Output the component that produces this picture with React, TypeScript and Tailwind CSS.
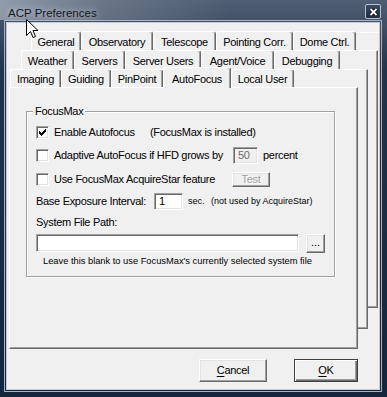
import React from 'react';
import clsx from 'clsx';

const raised =
  'border border-t-white border-l-white border-r-[#696969] border-b-[#696969] bg-[#f0f0f0] shadow-[inset_-1px_-1px_0_#a0a0a0,inset_1px_1px_0_#e3e3e3]';
const sunken =
  'border border-t-[#a0a0a0] border-l-[#a0a0a0] border-r-white border-b-white shadow-[inset_1px_1px_0_#696969,inset_-1px_-1px_0_#e3e3e3]';
const page =
  'border border-t-white border-l-white border-r-[#696969] border-b-[#696969] bg-[#f0f0f0] shadow-[inset_-1px_-1px_0_#a0a0a0]';

function Tab({ label, w, active }: { label: string; w: string; active?: boolean }) {
  return (
    <div
      className={clsx(
        'flex items-center justify-center border-l border-t border-r border-l-white border-t-white border-r-[#696969] rounded-t-[3px] bg-[#f0f0f0] shadow-[inset_-1px_0_0_#a0a0a0] pt-[2px] whitespace-nowrap leading-[13px]',
        w,
        active ? 'h-[21px] translate-y-[1px]' : 'h-full'
      )}
    >
      {label}
    </div>
  );
}

function Check({ checked }: { checked?: boolean }) {
  return (
    <span className={clsx('w-[13px] h-[13px] shrink-0 bg-white flex items-center justify-center', sunken)}>
      {checked && (
        <svg width="7" height="7" viewBox="0 0 7 7" shapeRendering="crispEdges">
          <path d="M0 2h1v1h1v1h1v-1h1v-1h1v-1h1v-1h1v3h-1v1h-1v1h-1v1h-1v1h-1v-1h-1v-1h-1v-1h-1z" fill="#000" />
        </svg>
      )}
    </span>
  );
}

export default function App() {
  return (
    <div className="relative w-[387px] h-[397px] flex flex-col bg-[linear-gradient(180deg,#505e73_0px,#22334a_70px,#15253b_100%)] font-['Liberation_Sans',Arial,sans-serif]">
      {/* title bar */}
      <div className="h-[20px] flex items-start pl-[8px] pr-[6px] bg-[linear-gradient(90deg,rgba(180,190,202,0.65)_0px,rgba(140,152,166,0.45)_100px,rgba(0,0,0,0)_230px)]">
        <span className="mt-[7px] text-[11.5px] leading-[13px] text-[#111722] [text-shadow:0_0_6px_rgba(255,255,255,0.8)]">
          ACP Preferences
        </span>
        <span className="ml-auto mt-[4px] w-[16px] h-[15px] rounded-[2px] border border-[#b9c2ce] bg-[linear-gradient(180deg,#3b4a60,#1e2d42)] flex items-center justify-center">
          <svg width="9" height="8" viewBox="0 0 9 8">
            <path d="M1.5 1 L7.5 7 M7.5 1 L1.5 7" stroke="#000" strokeWidth="3.4" />
            <path d="M1.5 1 L7.5 7 M7.5 1 L1.5 7" stroke="#fff" strokeWidth="1.8" />
          </svg>
        </span>
      </div>

      {/* frame */}
      <div className="ml-[4px] mr-[5px] mb-[5px] flex-1 border border-[#a7b3c3] p-[1px]">
        <div className="relative h-full border border-[#c6ccd4] bg-[#f0f0f0] overflow-hidden flex flex-col text-[11px] tracking-[-0.3px] text-black">
          {/* pages behind */}
          <div className="absolute left-[24px] top-[9px] w-[400px] h-[250px] border-t border-t-white" />
          <div className={clsx('absolute left-[14px] top-[27px] w-[357px] h-[258px]', page)} />
          <div className={clsx('absolute left-[3px] top-[46px] w-[358px] h-[260px]', page)} />

          {/* tab rows */}
          <div className="relative z-10 mt-[8px] h-[19px] pl-[24px] flex">
            <Tab label="General" w="w-[50px]" />
            <Tab label="Observatory" w="w-[72px]" />
            <Tab label="Telescope" w="w-[63px]" />
            <Tab label="Pointing Corr." w="w-[77px]" />
            <Tab label="Dome Ctrl." w="w-[63px]" />
          </div>
          <div className="relative z-10 h-[19px] pl-[14px] flex">
            <Tab label="Weather" w="w-[53px]" />
            <Tab label="Servers" w="w-[51px]" />
            <Tab label="Server Users" w="w-[76px]" />
            <Tab label="Agent/Voice" w="w-[73px]" />
            <Tab label="Debugging" w="w-[66px]" />
          </div>
          <div className="relative z-20 h-[18px] pl-[3px] flex items-end">
            <Tab label="Imaging" w="w-[51px]" />
            <Tab label="Guiding" w="w-[50px]" />
            <Tab label="PinPoint" w="w-[52px]" />
            <Tab label="AutoFocus" w="w-[68px]" active />
            <Tab label="Local User" w="w-[63px]" />
          </div>

          {/* AutoFocus page */}
          <div className={clsx('relative z-10 ml-[2px] w-[349px] h-[262px] pl-[16px] pt-[23px]', page)}>
            <div className="relative w-[309px] h-[166px] border border-[#a0a0a0] shadow-[inset_1px_1px_0_#fff,1px_1px_0_#fff] pl-[9px] flex flex-col leading-[13px]">
              <span className="absolute left-[6px] -top-[7px] px-[2px] bg-[#f0f0f0]">FocusMax</span>

              <div className="mt-[14px] h-[13px] flex items-center">
                <Check checked />
                <span className="ml-[5px] w-[96px]">Enable Autofocus</span>
                <span>(FocusMax is installed)</span>
              </div>

              <div className="mt-[8px] h-[17px] flex items-center">
                <Check />
                <span className="ml-[5px] w-[179px]">Adaptive AutoFocus if HFD grows by</span>
                <span className={clsx('w-[25px] h-[17px] bg-[#f0f0f0] pl-[4px] pt-[1px] text-[#6d6d6d]', sunken)}>50</span>
                <span className="ml-[5px]">percent</span>
              </div>

              <div className="mt-[8px] h-[15px] flex items-center">
                <Check />
                <span className="ml-[5px] w-[178px]">Use FocusMax AcquireStar feature</span>
                <span className={clsx('w-[38px] h-[15px] flex items-center justify-center text-[#a0a0a0] [text-shadow:1px_1px_0_#fff]', raised)}>
                  Test
                </span>
              </div>

              <div className="mt-[6px] h-[17px] flex items-center">
                <span className="w-[118px]">Base Exposure Interval:</span>
                <span className={clsx('w-[29px] h-[17px] bg-white pl-[4px] pt-[1px]', sunken)}>1</span>
                <span className="ml-[5px] w-[23px] text-[9px] tracking-normal">sec.</span>
                <span className="text-[9px] tracking-normal">(not used by AcquireStar)</span>
              </div>

              <div className="mt-[6px] h-[13px]">System File Path:</div>

              <div className="mt-[5px] h-[19px] flex items-start">
                <span className={clsx('w-[263px] h-[18px] bg-white', sunken)} />
                <span className={clsx('ml-[7px] w-[19px] h-[19px] flex items-center justify-center tracking-normal leading-none pb-[2px]', raised)}>
                  ...
                </span>
              </div>

              <div className="mt-[3px] h-[11px] pl-[7px] text-[9.3px] leading-[11px] tracking-normal">
                Leave this blank to use FocusMax's currently selected system file
              </div>
            </div>
          </div>

          {/* dialog buttons */}
          <div className="mt-[10px] pl-[192px] flex gap-[27px]">
            <button className={clsx('w-[68px] h-[23px] flex items-center justify-center', raised)}>
              <span className="underline underline-offset-[2px]">C</span>ancel
            </button>
            <button className="w-[64px] h-[23px] flex items-center justify-center border border-[#404040] bg-[#f0f0f0] shadow-[inset_1px_1px_0_#fff,inset_-1px_-1px_0_#696969,inset_-2px_-2px_0_#a0a0a0]">
              <span className="underline underline-offset-[2px]">O</span>K
            </button>
          </div>
        </div>
      </div>

      {/* mouse pointer */}
      <svg className="absolute left-[26px] top-[19px] z-50" width="13" height="20" viewBox="0 0 13 20">
        <path d="M0.5 0.5 L0.5 16.5 L4.5 12.5 L7 18.5 L9.5 17.5 L7 11.5 L12 11.5 Z" fill="#fff" stroke="#000" strokeWidth="1" strokeLinejoin="round" />
      </svg>
    </div>
  );
}
